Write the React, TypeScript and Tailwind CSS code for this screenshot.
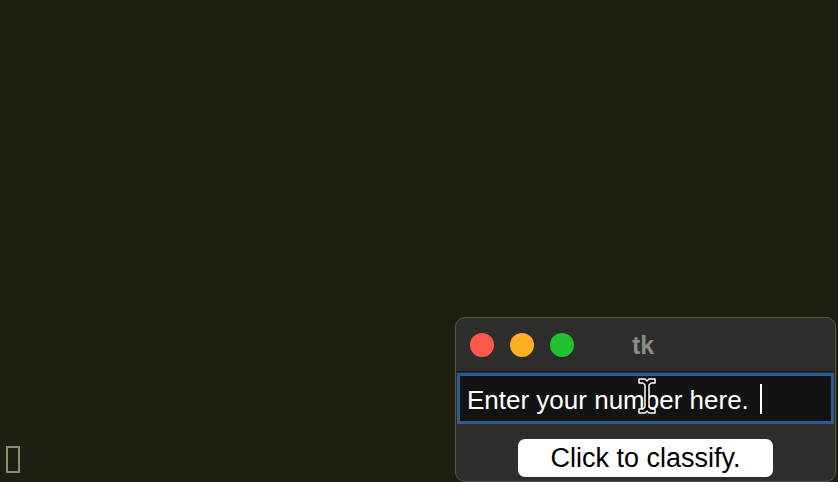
import React from "react";

function IBeam() {
  return (
    <svg
      className="absolute left-[636px] top-[377px]"
      width="22"
      height="38"
      viewBox="0 0 22 38"
    >
      <path
        d="M3 2h6l2 2 2-2h6v4h-4l-2 2v22l2 2h4v4h-6l-2-2-2 2H3v-4h4l2-2V8L7 6H3z"
        fill="#000"
        stroke="#fff"
        strokeWidth="1.5"
        strokeLinejoin="round"
      />
    </svg>
  );
}

export default function App() {
  return (
    <div className="relative w-full h-[482px] bg-[#1e1e11] overflow-hidden flex items-end justify-between font-['Liberation_Sans',Arial,sans-serif]">
      <div className="mb-[9px] ml-[6px] w-[14px] h-[27px] border-2 border-[#8a8a70]" />

      <div className="mr-[2px] w-[381px] h-[165px] rounded-[10px] border border-[#58583f] bg-[#2d2d2b] flex flex-col overflow-hidden">
        <div className="h-[54px] flex items-center relative border-b border-[#161614]">
          <div className="flex items-center gap-[16px] pl-[14px]">
            <span className="w-[24px] h-[24px] rounded-full bg-[#fe5a4b]" />
            <span className="w-[24px] h-[24px] rounded-full bg-[#fdb120]" />
            <span className="w-[24px] h-[24px] rounded-full bg-[#25c02e]" />
          </div>
          <span className="absolute left-[176px] top-[9px] text-[25px] font-bold text-[#8c8c86]">
            tk
          </span>
        </div>

        <div className="mt-[1px] mx-[1px] h-[51px] border-[3px] border-[#2d5c8e] bg-[#131313] flex items-center pl-[7px]">
          <span className="text-[26px] text-white leading-none pt-[3px]">
            Enter your number here.
          </span>
          <span className="ml-[11px] w-[2px] h-[30px] bg-white" />
        </div>

        <div className="flex justify-center mt-[15px]">
          <div className="w-[255px] h-[38px] rounded-[7px] bg-white flex items-center justify-center">
            <span className="text-[27px] text-black leading-none">
              Click to classify.
            </span>
          </div>
        </div>
      </div>

      <IBeam />
    </div>
  );
}
